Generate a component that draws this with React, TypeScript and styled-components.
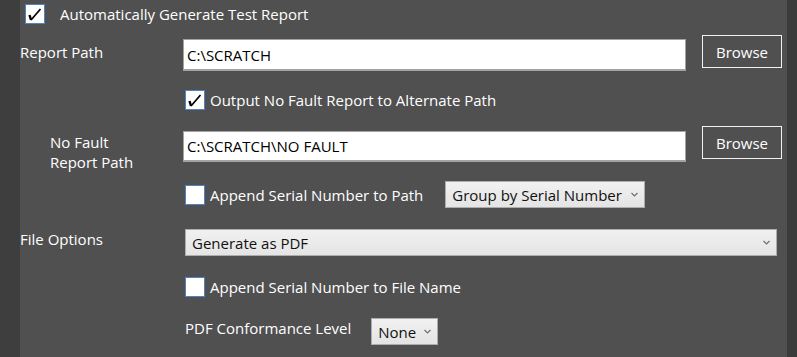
import React from 'react';
import styled, { createGlobalStyle } from 'styled-components';

const GlobalStyle = createGlobalStyle`
  html, body {
    margin: 0;
    padding: 0;
    background: #3d3d3d;
  }
  body {
    font-family: 'Open Sans', 'Noto Sans', sans-serif;
    font-size: 15px;
    color: #ffffff;
  }
`;

const Page = styled.div`
  display: flex;
  width: 797px;
  height: 357px;
  overflow: hidden;
`;

const Strip = styled.div<{ $w: number; $bg: string }>`
  width: ${(p) => p.$w}px;
  flex-shrink: 0;
  background: ${(p) => p.$bg};
`;

const Panel = styled.div`
  flex: 1;
  background: #505050;
  display: flex;
  flex-direction: column;
`;

const Row = styled.div<{ $h: number; $pl?: number }>`
  display: flex;
  align-items: flex-start;
  height: ${(p) => p.$h}px;
  padding-left: ${(p) => p.$pl ?? 0}px;
  flex-shrink: 0;
`;

const Label = styled.div<{ $mt: number; $pl?: number }>`
  width: 163px;
  flex-shrink: 0;
  box-sizing: border-box;
  padding-left: ${(p) => p.$pl ?? 0}px;
  margin-top: ${(p) => p.$mt}px;
  line-height: 20px;
  white-space: pre-line;
`;

const Content = styled.div`
  display: flex;
  align-items: flex-start;
  flex: 1;
`;

const Field = styled.div<{ $mt: number; $h: number }>`
  box-sizing: border-box;
  width: 503px;
  height: ${(p) => p.$h}px;
  margin-top: ${(p) => p.$mt}px;
  background: #ffffff;
  border: 1px solid #a3a3a3;
  border-bottom-width: 2px;
  color: #000000;
  padding: 0 3px;
  display: flex;
  align-items: center;
`;

const BrowseButton = styled.button<{ $mt: number }>`
  box-sizing: border-box;
  width: 80px;
  height: 33px;
  margin-top: ${(p) => p.$mt}px;
  margin-left: 16px;
  background: transparent;
  border: 1px solid #f2f2f2;
  color: #ffffff;
  font: inherit;
  padding: 0;
`;

const Check = styled.div<{ $mt: number; $ml?: number; $gap?: number }>`
  display: flex;
  align-items: center;
  margin-top: ${(p) => p.$mt}px;
  margin-left: ${(p) => p.$ml ?? 2}px;
  gap: ${(p) => p.$gap ?? 5}px;
  white-space: nowrap;
`;

const Box = styled.span`
  box-sizing: border-box;
  width: 20px;
  height: 20px;
  flex-shrink: 0;
  background: #ffffff;
  border: 1px solid #4f83c6;
  display: flex;
  align-items: center;
  justify-content: center;
`;

const Select = styled.div<{ $mt: number; $ml?: number; $w: number }>`
  box-sizing: border-box;
  width: ${(p) => p.$w}px;
  height: 27px;
  margin-top: ${(p) => p.$mt}px;
  margin-left: ${(p) => p.$ml ?? 0}px;
  background: linear-gradient(#f1f1f1, #e4e4e4);
  border: 1px solid #adadad;
  color: #111111;
  display: flex;
  align-items: center;
  justify-content: space-between;
  padding: 0 6px 0 6px;
  white-space: nowrap;
`;

const Tick = () => (
  <svg width="16" height="16" viewBox="0 0 16 16">
    <path d="M2.5 9 L4 14" fill="none" stroke="#000" strokeWidth="2.4" />
    <path d="M4 14 L13.5 3" fill="none" stroke="#000" strokeWidth="1.7" />
  </svg>
);

const Chevron = () => (
  <svg width="7" height="5" viewBox="0 0 7 5">
    <path d="M0.5 1 L3.5 4 L6.5 1" fill="none" stroke="#707070" strokeWidth="1.2" />
  </svg>
);

function CheckOption(props: { checked?: boolean; label: string; mt: number; ml?: number; gap?: number }) {
  return (
    <Check $mt={props.mt} $ml={props.ml} $gap={props.gap}>
      <Box>{props.checked && <Tick />}</Box>
      <span>{props.label}</span>
    </Check>
  );
}

export default function App() {
  return (
    <>
      <GlobalStyle />
      <Page>
        <Strip $w={20} $bg="#3e3e3e" />
        <Panel>
          <Row $h={28} $pl={5}>
            <CheckOption checked label="Automatically Generate Test Report" mt={4} ml={0} gap={15} />
          </Row>

          <Row $h={47}>
            <Label $mt={14}>Report Path</Label>
            <Content>
              <Field $mt={11} $h={32}>C:\SCRATCH</Field>
              <BrowseButton $mt={7}>Browse</BrowseButton>
            </Content>
          </Row>

          <Row $h={45}>
            <Label $mt={0} />
            <CheckOption checked label="Output No Fault Report to Alternate Path" mt={15} />
          </Row>

          <Row $h={52}>
            <Label $mt={12} $pl={30}>{'No Fault\nReport Path'}</Label>
            <Content>
              <Field $mt={11} $h={31}>C:\SCRATCH\NO FAULT</Field>
              <BrowseButton $mt={6}>Browse</BrowseButton>
            </Content>
          </Row>

          <Row $h={43}>
            <Label $mt={0} />
            <Content>
              <CheckOption label="Append Serial Number to Path" mt={13} />
              <Select $mt={9} $ml={22} $w={200}>
                <span>Group by Serial Number</span>
                <Chevron />
              </Select>
            </Content>
          </Row>

          <Row $h={50}>
            <Label $mt={14}>File Options</Label>
            <Select $mt={14} $ml={2} $w={592}>
              <span>Generate as PDF</span>
              <Chevron />
            </Select>
          </Row>

          <Row $h={45}>
            <Label $mt={0} />
            <CheckOption label="Append Serial Number to File Name" mt={12} />
          </Row>

          <Row $h={47}>
            <Label $mt={0} />
            <Content>
              <Check $mt={8} $ml={2}>
                <span>PDF Conformance Level</span>
              </Check>
              <Select $mt={8} $ml={20} $w={67}>
                <span>None</span>
                <Chevron />
              </Select>
            </Content>
          </Row>
        </Panel>
        <Strip $w={10} $bg="#3b3b3b" />
      </Page>
    </>
  );
}
